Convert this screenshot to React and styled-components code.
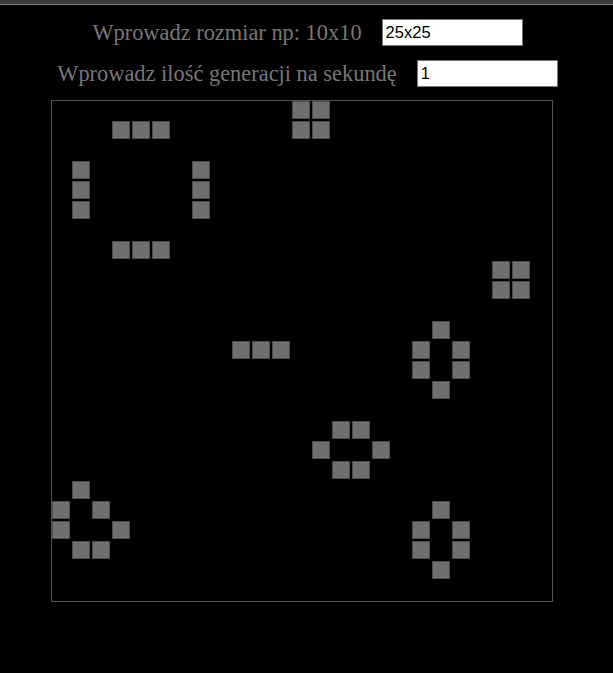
import React, { useState } from 'react';
import styled, { createGlobalStyle } from 'styled-components';

const SIZE = 25;

const ALIVE = [
  [0, 12], [0, 13], [1, 12], [1, 13],
  [1, 3], [1, 4], [1, 5],
  [3, 1], [4, 1], [5, 1], [3, 7], [4, 7], [5, 7],
  [7, 3], [7, 4], [7, 5],
  [8, 22], [8, 23], [9, 22], [9, 23],
  [11, 19], [12, 18], [12, 20], [13, 18], [13, 20], [14, 19],
  [12, 9], [12, 10], [12, 11],
  [16, 14], [16, 15], [17, 13], [17, 16], [18, 14], [18, 15],
  [19, 1], [20, 0], [20, 2], [21, 0], [21, 3], [22, 1], [22, 2],
  [20, 19], [21, 18], [21, 20], [22, 18], [22, 20], [23, 19],
];

const GlobalStyle = createGlobalStyle`
    body {
        margin: 0;
        background-color: #000;
        font-family: "Liberation Serif", "Times New Roman", serif;
    }
`;

const App = () => {
    const [size, setSize] = useState('25x25');
    const [speed, setSpeed] = useState('1');
    const alive = new Set(ALIVE.map(([r, c]) => r * SIZE + c));

    return (
        <>
            <GlobalStyle />
            <TopBar />
            <Controls>
                <Row>
                    <Label>Wprowadz rozmiar np: 10x10</Label>
                    <Input type="text" value={size} onChange={(e) => setSize(e.target.value)} />
                </Row>
                <Row>
                    <Label>Wprowadz ilość generacji na sekundę</Label>
                    <Input type="text" value={speed} onChange={(e) => setSpeed(e.target.value)} />
                </Row>
            </Controls>
            <Board>
                {Array.from({ length: SIZE * SIZE }, (_, i) => (
                    <Cell key={i} $alive={alive.has(i)} />
                ))}
            </Board>
        </>
    );
};

const TopBar = styled.div`
    height: 4px;
    background-color: #3d3d3d;
    border-bottom: 1px solid #7a7a7a;
`;

const Controls = styled.div`
    display: flex;
    flex-direction: column;
    padding-top: 7px;
`;

const Row = styled.div`
    height: 41px;
    display: flex;
    align-items: center;
    justify-content: center;
    gap: 20px;
    padding-left: 2px;
`;

const Label = styled.span`
    font-size: 22.4px;
    color: #777;
`;

const Input = styled.input`
    box-sizing: border-box;
    width: 141px;
    height: 27px;
    padding: 1px 3px;
    border: 1px solid #767676;
    background-color: #fff;
    color: #000;
    font-family: "Liberation Sans", Arial, sans-serif;
    font-size: 16.5px;
    outline: none;
`;

const Board = styled.div`
    margin: 6px 0 0 51px;
    width: ${SIZE * 20}px;
    display: grid;
    grid-template-columns: repeat(${SIZE}, 20px);
    grid-auto-rows: 20px;
    border: 1px solid #555;
`;

const Cell = styled.div`
    box-sizing: border-box;
    width: 18px;
    height: 18px;
    background-color: ${(p) => (p.$alive ? '#6f6f6f' : 'transparent')};
    border: 1px solid ${(p) => (p.$alive ? '#4c4c4c' : 'transparent')};
`;

export default App;
